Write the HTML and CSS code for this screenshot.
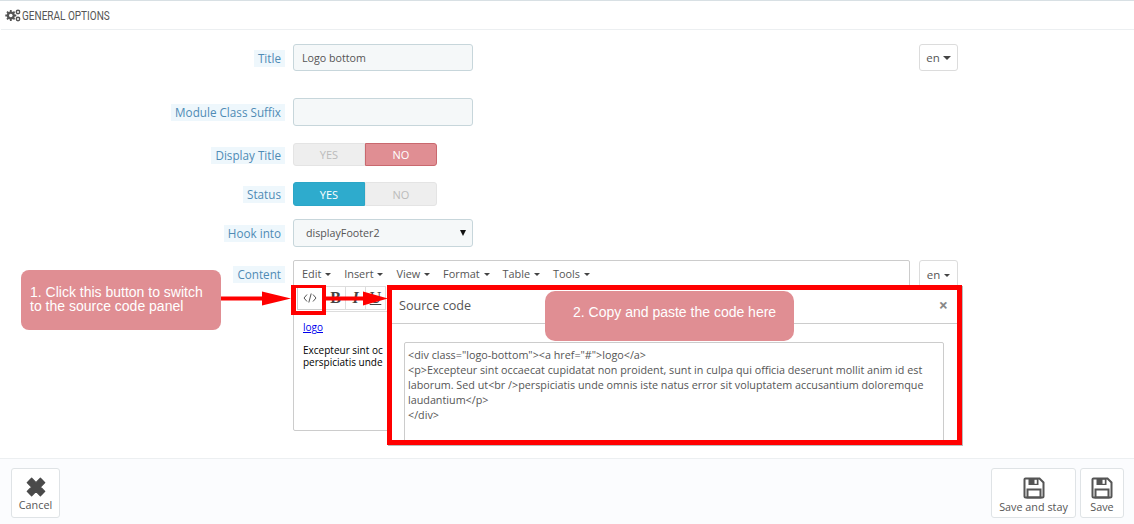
FILE: index.html
```html
<!DOCTYPE html>
<html lang="en">
<head>
<meta charset="utf-8">
<title>General options</title>
<link rel="stylesheet" href="styles.css">
</head>
<body>
<div class="page">
  <header class="panel-head">
    <svg class="cogs" viewBox="0 0 16 13" width="16" height="13"><g fill="#555"><circle cx="5.800" cy="6.500" r="4"/><g stroke="#555" stroke-width="1.800"><path d="M5.800 1v11M.3 6.500h11M2 2.700l7.600 7.600M9.600 2.700L2 10.300"/></g><circle cx="13" cy="3" r="2.400"/><circle cx="13" cy="10" r="2.400"/></g><circle cx="5.800" cy="6.500" r="1.800" fill="#fff"/><circle cx="13" cy="3" r="1" fill="#fff"/><circle cx="13" cy="10" r="1" fill="#fff"/></svg>
    <span class="head-text">GENERAL OPTIONS</span>
  </header>

  <div class="form">
    <div class="row row-title">
      <div class="label-col"><span class="label">Title</span></div>
      <div class="field input">Logo bottom</div>
      <button class="lang lang-top">en<i class="caret caret-lg"></i></button>
    </div>
    <div class="row row-suffix">
      <div class="label-col"><span class="label">Module Class Suffix</span></div>
      <div class="field input input-tall"></div>
    </div>
    <div class="row row-display">
      <div class="label-col"><span class="label">Display Title</span></div>
      <div class="switch"><span class="opt">YES</span><span class="opt opt-no">NO</span></div>
    </div>
    <div class="row row-status">
      <div class="label-col"><span class="label">Status</span></div>
      <div class="switch switch-status"><span class="opt opt-yes">YES</span><span class="opt">NO</span></div>
    </div>
    <div class="row row-hook">
      <div class="label-col"><span class="label">Hook into</span></div>
      <div class="field input input-tall select"><span>displayFooter2</span><i class="select-arrow"></i></div>
    </div>
    <div class="row row-content">
      <div class="label-col label-top"><span class="label">Content</span></div>
      <div class="editor">
        <div class="menubar">
          <span class="menu">Edit <i class="caret"></i></span>
          <span class="menu">Insert <i class="caret"></i></span>
          <span class="menu">View <i class="caret"></i></span>
          <span class="menu">Format <i class="caret"></i></span>
          <span class="menu">Table <i class="caret"></i></span>
          <span class="menu">Tools <i class="caret"></i></span>
        </div>
        <div class="toolbar">
          <span class="tool tool-code"><svg viewBox="0 0 14 12" width="14" height="12"><path d="M4 2.500L1 6l3 3.500M10 2.500L13 6l-3 3.500M8.200 1.500L5.800 10.500" fill="none" stroke="#555" stroke-width="1"/></svg></span>
          <span class="tool tool-b">B</span>
          <span class="tool tool-i">I</span>
          <span class="tool tool-u">U</span>
        </div>
        <div class="editor-body">
          <a class="editor-link" href="#">logo</a>
          <p class="editor-text">Excepteur sint oc<br>perspiciatis unde</p>
        </div>
      </div>
      <button class="lang lang-content">en <i class="caret"></i></button>
    </div>
  </div>

  <footer class="foot">
    <button class="action">
      <svg viewBox="2 2 16 16" width="20" height="20"><path d="M3 6.500L6.500 3 10 6.500 13.500 3 17 6.500 13.500 10 17 13.500 13.500 17 10 13.500 6.500 17 3 13.500 6.500 10z" fill="#4a4a4a" stroke="#4a4a4a" stroke-linejoin="round"/></svg>
      <span>Cancel</span>
    </button>
    <div class="foot-right">
      <button class="action action-stay">
        <svg viewBox="0 0 22 22" width="22" height="22"><use href="#floppy"/></svg>
        <span>Save and stay</span>
      </button>
      <button class="action action-save">
        <svg viewBox="0 0 22 22" width="22" height="22"><use href="#floppy"/></svg>
        <span>Save</span>
      </button>
    </div>
  </footer>

  <svg class="defs" width="0" height="0"><defs><g id="floppy"><path d="M1.500 2.500a1 1 0 0 1 1-1h14l4 4v14a1 1 0 0 1-1 1h-17a1 1 0 0 1-1-1z" fill="none" stroke="#555" stroke-width="2"/><path d="M5.500 1.500h10v6.500h-10z" fill="#555"/><path d="M11.500 2.800h2.300v4h-2.300z" fill="#fff"/><path d="M4.500 12.500h13v8h-13z" fill="none" stroke="#555" stroke-width="2"/></g></defs></svg>

  <section class="modal">
    <div class="modal-head"><span>Source code</span><span class="close">×</span></div>
    <div class="code">&lt;div class="logo-bottom"&gt;&lt;a href="#"&gt;logo&lt;/a&gt;<br>&lt;p&gt;Excepteur sint occaecat cupidatat non proident, sunt in culpa qui officia deserunt mollit anim id est<br>laborum. Sed ut&lt;br /&gt;perspiciatis unde omnis iste natus error sit voluptatem accusantium doloremque<br>laudantium&lt;/p&gt;<br>&lt;/div&gt;</div>
  </section>

  <div class="frame frame-btn"></div>
  <div class="frame frame-modal"></div>
  <svg class="arrows" viewBox="0 0 180 20" width="180" height="20"><path d="M44 1.500l29 7-29 7zM145 1.500l25 7-25 7z" fill="#f00"/><path d="M0 6.500h46v4H0zM108 6.500h39v4h-39z" fill="#f00"/></svg>
  <div class="note note-one">1. Click this button to switch<br>to the source code panel</div>
  <div class="note note-two">2. Copy and paste the code here</div>
</div>
</body>
</html>
```

FILE: styles.css
```css
* { box-sizing: border-box; }
html, body { margin: 0; height: 100%; overflow: hidden; background: #fff; }
body { font-family: "Open Sans", sans-serif; font-size: 12px; color: #555; }
.page { position: relative; width: 1134px; height: 524px; display: flex; flex-direction: column; border-top: 1px solid #d8e0e4; }

.panel-head { height: 29px; margin-left: 1px; display: flex; align-items: center; gap: 1px; padding-left: 4px; border-bottom: 1px solid #eceff1; }
.head-text { display: inline-block; font-family: "Roboto", sans-serif; font-size: 13px; color: #555; white-space: nowrap; transform: scaleX(.77); transform-origin: left center; }

.form { flex: 1; }
.row { display: flex; align-items: flex-start; }
.row-title { margin-top: 14px; }
.row-suffix { margin-top: 27px; }
.row-display { margin-top: 17px; }
.row-status { margin-top: 16px; }
.row-hook { margin-top: 13px; }
.row-content { margin-top: 13px; }

.label-col { width: 285px; text-align: right; padding-top: 6px; flex: none; }
.label-top { padding-top: 6px; }
.label { display: inline-block; background: #eef7fc; color: #4f8bb5; padding: 0 4px; line-height: 17px; font-size: 11.700px; }

.field { margin-left: 8px; width: 180px; }
.input { height: 27px; background: #f5f8f9; border: 1px solid #c7d6db; border-radius: 3px; padding: 0 8px; line-height: 26px; font-size: 10.700px; }
.input-tall { height: 28px; }
.select { position: relative; padding-left: 12px; line-height: 27px; }
.select-arrow { position: absolute; right: 6px; top: 10px; border: 3.500px solid transparent; border-top: 6px solid #111; border-bottom: 0; }

.lang { margin-left: 446px; width: 39px; height: 27px; background: #fff; border: 1px solid #dcdcdc; border-radius: 3px; font: 11.500px "Open Sans", sans-serif; color: #555; padding: 0; }
.lang-content { margin-left: 9px; height: 28px; }

.caret { display: inline-block; vertical-align: 2px; border: 3px solid transparent; border-top: 3px solid #444; border-bottom: 0; margin-left: 1px; }
.caret-lg { border-width: 4px 4px 0; margin-left: 3px; }

.switch { margin-left: 8px; display: flex; width: 144px; height: 23px; }
.switch-status { height: 24px; }
.row-display .label-col { padding-top: 4px; }
.row-status .label-col { padding-top: 4px; }
.row-hook .label-col { padding-top: 6px; }
.row-suffix .label-col { padding-top: 6px; }
.opt { flex: 1; display: flex; align-items: center; justify-content: center; background: #eee; border: 1px solid #e4e4e4; color: #bbb; font-size: 11px; }
.opt:first-child { border-radius: 3px 0 0 3px; }
.opt:last-child { border-radius: 0 3px 3px 0; }
.opt-no { background: #e08e93; border-color: #c9686e; color: #fff; }
.opt-yes { background: #2eabcd; border-color: #2ba6c7; color: #fff; }

.editor { margin-left: 8px; width: 617px; height: 171px; border: 1px solid #ccc; border-radius: 2px; background: #fff; }
.menubar { height: 25px; display: flex; gap: 13px; padding-left: 8px; align-items: center; font-size: 10.900px; color: #555; }
.menu { white-space: nowrap; }
.toolbar { display: flex; padding-left: 3px; height: 26px; border-bottom: 1px solid #ddd; }
.tool { width: 20px; height: 24px; border: 1px solid #ddd; border-left: 0; display: flex; align-items: center; justify-content: center; font: bold 16px "Liberation Serif", serif; color: #444; }
.tool-code { width: 26px; margin-right: 3px; border-left: 1px solid #ccc; border-color: #ccc; }
.tool-i { font-style: italic; }
.tool-u { text-decoration: underline; font-weight: 400; }
.editor-body { padding: 9px 9px; font-size: 10px; color: #000; line-height: 12px; }
.editor-link { color: #00e; font-size: 10px; text-decoration: underline; }
.editor-text { margin: 11px 0 0; white-space: nowrap; }

.foot { height: 66px; background: #fbfcfe; border-top: 1px solid #eceff1; display: flex; justify-content: space-between; padding: 9px 10px 0 11px; }
.foot-right { display: flex; gap: 4px; }
.action { height: 50px; width: 49px; padding: 8px 0 0; background: #fff; border: 1px solid #dfe3e6; border-radius: 3px; display: flex; flex-direction: column; align-items: center; font: 10.800px "Open Sans", sans-serif; color: #555; }
.action svg { display: block; margin-bottom: 1px; flex: none; }
.action span { line-height: 14px; white-space: nowrap; }
.action-stay { width: 85px; }
.action-save { width: 44px; }
.defs { position: absolute; }

.modal { position: absolute; left: 388px; top: 285px; width: 575px; height: 160px; background: #fff; border: 1px solid #bbb; overflow: hidden; }
.modal-head { height: 37px; padding: 0 14px 0 10px; display: flex; justify-content: space-between; align-items: center; border-bottom: 1px solid #ccc; font-size: 12.600px; color: #555; }
.close { font-size: 16px; font-weight: 700; color: #888; }
.code { margin: 18px 0 0 15px; width: 540px; height: 120px; border: 1px solid #ccc; border-radius: 2px; padding: 4px 3px; font-size: 10.770px; line-height: 15px; white-space: nowrap; }

.frame { position: absolute; border: 5px solid #f00; }
.frame-btn { left: 291px; top: 284px; width: 35px; height: 30px; border-width: 3px 4px 4px 5px; }
.frame-modal { left: 387px; top: 284px; width: 575px; height: 160px; }
.arrows { position: absolute; left: 218px; top: 289px; }

.note { position: absolute; background: #e08e93; color: #fff; font: 14px/14px "Liberation Sans", Arial, sans-serif; border-radius: 8px; }
.note-one { left: 21px; top: 269px; width: 200px; height: 60px; padding: 15px 9px; }
.note-two { left: 545px; top: 290px; width: 249px; height: 50px; line-height: 42px; padding-left: 28px; border-radius: 10px; }
```
